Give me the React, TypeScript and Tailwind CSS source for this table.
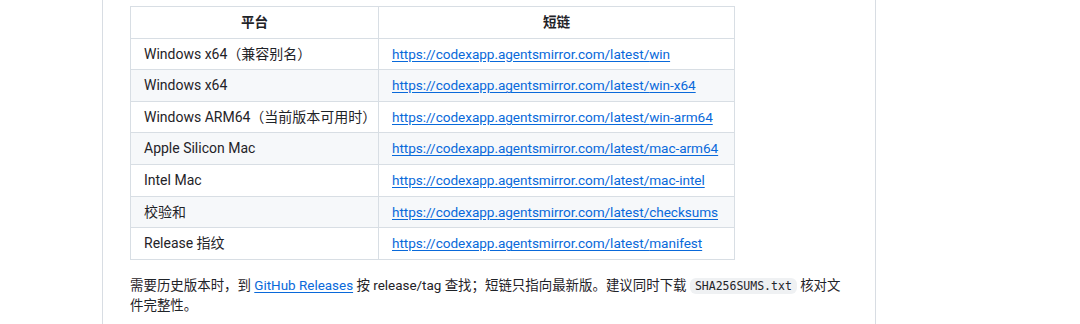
import React from "react";

const rows: [string, string][] = [
  ["Windows x64（兼容别名）", "win"],
  ["Windows x64", "win-x64"],
  ["Windows ARM64（当前版本可用时）", "win-arm64"],
  ["Apple Silicon Mac", "mac-arm64"],
  ["Intel Mac", "mac-intel"],
  ["校验和", "checksums"],
  ["Release 指纹", "manifest"],
];

const cell = "border border-[#d8dee4] px-[13px] py-[6px] h-[31.6px] align-middle whitespace-nowrap";

export default function App() {
  return (
    <div
      className="w-[1080px] h-[324px] bg-white overflow-hidden text-[#1f2328]"
      style={{ fontFamily: 'Roboto, "Noto Sans CJK SC", sans-serif' }}
    >
      <div className="ml-[102px] w-[774px] h-full border-x border-[#d8dde3] px-[27px] pt-[6px] text-[13.6px] leading-[18.6px]">
        <table className="table-fixed border-collapse w-[604px]">
          <colgroup>
            <col className="w-[248px]" />
            <col className="w-[356px]" />
          </colgroup>
          <thead>
            <tr className="bg-white">
              <th className={cell + " font-semibold text-center"}>平台</th>
              <th className={cell + " font-semibold text-center"}>短链</th>
            </tr>
          </thead>
          <tbody>
            {rows.map(([name, slug], i) => (
              <tr key={slug} className={i % 2 === 1 ? "bg-[#f6f8fa]" : "bg-white"}>
                <td className={cell + " text-[14px]"}>{name}</td>
                <td className={cell}>
                  <a className="text-[#0969da] underline underline-offset-[2px] tracking-[-0.05px]" href="#">
                    https://codexapp.agentsmirror.com/latest/{slug}
                  </a>
                </td>
              </tr>
            ))}
          </tbody>
        </table>
        <p className="mt-[16px] leading-[20px] w-[718px] text-[13.45px]">
          需要历史版本时，到{" "}
          <a className="text-[#0969da] underline underline-offset-[2px]" href="#">
            GitHub Releases
          </a>{" "}
          按 release/tag 查找；短链只指向最新版。建议同时下载{" "}
          <code
            className="bg-[#eff1f3] rounded-[6px] px-[5px] py-[1px] text-[11.5px]"
            style={{ fontFamily: '"DejaVu Sans Mono", "Liberation Mono", monospace' }}
          >
            SHA256SUMS.txt
          </code>{" "}
          核对文件完整性。
        </p>
      </div>
    </div>
  );
}
